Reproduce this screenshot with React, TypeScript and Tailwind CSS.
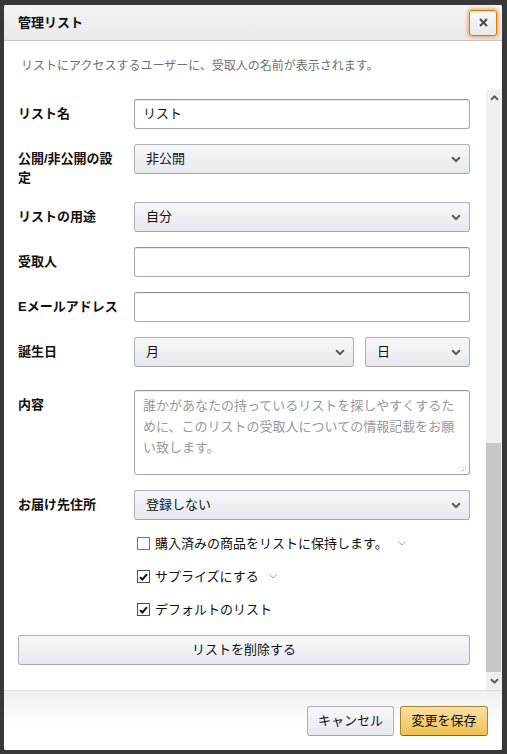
import type { ReactNode } from "react";

const font = "font-['Arial','Noto_Sans_CJK_JP',sans-serif]";

function ChevronDown({ className = "" }: { className?: string }) {
	return (
		<svg width="10" height="7" viewBox="0 0 10 7" className={className} fill="none">
			<path d="M1.2 1.3 5 5.1l3.8-3.8" stroke="currentColor" strokeWidth="2" />
		</svg>
	);
}

function SmallChevron() {
	return (
		<svg width="8" height="5" viewBox="0 0 8 5" className="ml-[10px] text-[#a6a6a6]" fill="none">
			<path d="M.6.6 4 4 7.4.6" stroke="currentColor" strokeWidth="1" />
		</svg>
	);
}

function Label({ children }: { children: ReactNode }) {
	return (
		<div className="pt-[5px] pr-[12px] text-[13px] leading-[19px] font-bold text-[#111]">
			{children}
		</div>
	);
}

function TextInput({ value = "" }: { value?: string }) {
	return (
		<div className="flex h-[30px] items-center rounded-[3px] border border-[#a6a6a6] border-t-[#949494] bg-white pl-[8px] text-[13px] text-[#111] shadow-[inset_0_1px_0_rgba(0,0,0,0.07)]">
			{value}
		</div>
	);
}

function Select({ value, className = "" }: { value: string; className?: string }) {
	return (
		<div
			className={`flex h-[30px] items-center justify-between rounded-[3px] border border-[#adb1b8] border-b-[#a2a6ac] bg-linear-to-b from-[#f7f8fa] to-[#e7e9ec] pl-[11px] pr-[8px] text-[13px] text-[#111] ${className}`}
		>
			<span>{value}</span>
			<ChevronDown className="text-[#555]" />
		</div>
	);
}

function Checkbox({ checked, label, more }: { checked: boolean; label: string; more?: boolean }) {
	return (
		<div className="flex h-[33px] items-center pl-[3px] text-[13px] text-[#111]">
			<span
				className={`flex h-[13px] w-[13px] items-center justify-center border bg-white ${checked ? "border-[#4d4d4d]" : "border-[#767676]"}`}
			>
				{checked && (
					<svg width="9" height="8" viewBox="0 0 9 8" fill="none">
						<path d="M1 4.2 3.4 6.5 8 1.2" stroke="#111" strokeWidth="2" />
					</svg>
				)}
			</span>
			<span className="ml-[5px]">{label}</span>
			{more && <SmallChevron />}
		</div>
	);
}

function ScrollArrow({ up }: { up?: boolean }) {
	return (
		<svg width="9" height="6" viewBox="0 0 9 6" fill="none" className={up ? "rotate-180" : ""}>
			<path d="M1 1.2 4.5 4.6 8 1.2" stroke="#5a5a5a" strokeWidth="2" />
		</svg>
	);
}

export default function App() {
	return (
		<div className={`h-[754px] w-[507px] bg-[#383838] pt-[5px] pr-[5px] pb-[4px] pl-[4px] ${font}`}>
			<div className="flex h-full flex-col overflow-hidden rounded-[2px] bg-white">
				<div className="flex h-[36px] shrink-0 items-center justify-between border-b border-[#c6c6c6] bg-linear-to-b from-[#f4f4f4] to-[#e9e9e9] pl-[14px] pr-[5px]">
					<span className="text-[13px] font-bold text-[#111]">管理リスト</span>
					<button className="flex h-[26px] w-[28px] items-center justify-center rounded-[3px] border border-[#e77600] bg-linear-to-b from-[#f7f8fa] to-[#e7e9ec] shadow-[0_0_3px_2px_rgba(228,121,17,0.45)]">
						<svg width="9" height="9" viewBox="0 0 9 9" fill="none">
							<path d="M1 1l7 7M8 1 1 8" stroke="#4a4a4a" strokeWidth="2" />
						</svg>
					</button>
				</div>

				<div className="flex h-[48px] shrink-0 items-center pl-[17px] pt-[1px] text-[12px] text-[#6f6f6f]">
					リストにアクセスするユーザーに、受取人の名前が表示されます。
				</div>

				<div className="flex min-h-0 flex-1">
					<div className="flex-1 pt-[10px] pl-[14px] pr-[16px]">
						<div className="grid grid-cols-[116px_1fr] gap-y-[15px]">
							<Label>リスト名</Label>
							<TextInput value="リスト" />

							<Label>公開/非公開の設定</Label>
							<Select value="非公開" />

							<Label>リストの用途</Label>
							<Select value="自分" />

							<Label>受取人</Label>
							<TextInput />

							<Label>Eメールアドレス</Label>
							<TextInput />

							<Label>誕生日</Label>
							<div className="flex gap-[11px]">
								<Select value="月" className="flex-1" />
								<Select value="日" className="w-[105px]" />
							</div>

							<div className="mt-[8px]">
								<Label>内容</Label>
							</div>
							<div className="relative mt-[8px] h-[85px] rounded-[3px] border border-[#a6a6a6] border-t-[#949494] bg-white px-[8px] pt-[4px] text-[13px] leading-[21px] text-[#999] shadow-[inset_0_1px_0_rgba(0,0,0,0.07)]">
								誰かがあなたの持っているリストを探しやすくするために、このリストの受取人についての情報記載をお願い致します。
								<svg width="7" height="7" viewBox="0 0 7 7" className="absolute right-[2px] bottom-[2px]">
									<rect x="5" y="1" width="1" height="1" fill="#b5b5b5" />
									<rect x="3" y="3" width="1" height="1" fill="#b5b5b5" />
									<rect x="5" y="3" width="1" height="1" fill="#b5b5b5" />
									<rect x="1" y="5" width="1" height="1" fill="#b5b5b5" />
									<rect x="3" y="5" width="1" height="1" fill="#b5b5b5" />
									<rect x="5" y="5" width="1" height="1" fill="#b5b5b5" />
								</svg>
							</div>

							<Label>お届け先住所</Label>
							<Select value="登録しない" />
						</div>

						<div className="mt-[7px] ml-[116px] flex flex-col">
							<Checkbox checked={false} label="購入済みの商品をリストに保持します。" more />
							<Checkbox checked label="サプライズにする" more />
							<Checkbox checked label="デフォルトのリスト" />
						</div>

						<button className="mt-[9px] flex h-[30px] w-full items-center justify-center rounded-[3px] border border-[#adb1b8] border-b-[#a2a6ac] bg-linear-to-b from-[#f7f8fa] to-[#e7e9ec] text-[13px] text-[#111]">
							リストを削除する
						</button>
					</div>

					<div className="flex w-[16px] shrink-0 flex-col bg-[#f0f0f0]">
						<div className="flex h-[17px] items-center justify-center">
							<ScrollArrow up />
						</div>
						<div className="flex-1" />
						<div className="mr-[1px] h-[229px] bg-[#c8c8c8]" />
						<div className="flex h-[18px] items-center justify-center">
							<ScrollArrow />
						</div>
					</div>
				</div>

				<div className="flex h-[60px] shrink-0 items-center justify-end gap-[6px] border-t border-[#dddddd] bg-linear-to-b from-[#f0f0f0] to-white to-60% pr-[14px]">
					<button className="flex h-[30px] w-[87px] items-center justify-center rounded-[3px] border border-[#adb1b8] border-b-[#a2a6ac] bg-linear-to-b from-[#f7f8fa] to-[#e7e9ec] text-[13px] text-[#111]">
						キャンセル
					</button>
					<button className="flex h-[30px] w-[88px] items-center justify-center rounded-[3px] border border-[#a88734] border-b-[#846a29] bg-linear-to-b from-[#f7dfa5] to-[#f0c14b] text-[13px] text-[#111]">
						変更を保存
					</button>
				</div>
			</div>
		</div>
	);
}
